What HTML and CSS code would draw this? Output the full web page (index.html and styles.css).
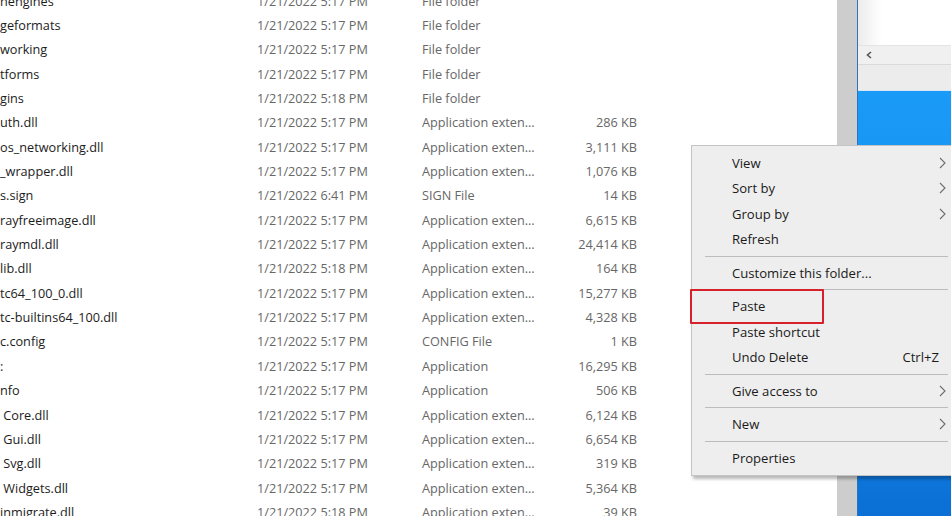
FILE: index.html
```html
<!DOCTYPE html>
<html lang="en">
<head>
    <meta charset="UTF-8">
    <meta name="viewport" content="width=device-width, initial-scale=1.0">
    <title>Explorer - context menu</title>
    <link rel="stylesheet" href="styles.css">
</head>
<body>
    <div class="files">
        <div class="file-list">
            <div class="row"><span class="name">hengines</span><span class="date">1/21/2022 5:17 PM</span><span class="type">File folder</span><span class="size"></span></div>
            <div class="row"><span class="name">geformats</span><span class="date">1/21/2022 5:17 PM</span><span class="type">File folder</span><span class="size"></span></div>
            <div class="row"><span class="name">working</span><span class="date">1/21/2022 5:17 PM</span><span class="type">File folder</span><span class="size"></span></div>
            <div class="row"><span class="name">tforms</span><span class="date">1/21/2022 5:17 PM</span><span class="type">File folder</span><span class="size"></span></div>
            <div class="row"><span class="name">gins</span><span class="date">1/21/2022 5:18 PM</span><span class="type">File folder</span><span class="size"></span></div>
            <div class="row"><span class="name">uth.dll</span><span class="date">1/21/2022 5:17 PM</span><span class="type">Application exten...</span><span class="size">286 KB</span></div>
            <div class="row"><span class="name">os_networking.dll</span><span class="date">1/21/2022 5:17 PM</span><span class="type">Application exten...</span><span class="size">3,111 KB</span></div>
            <div class="row"><span class="name">_wrapper.dll</span><span class="date">1/21/2022 5:17 PM</span><span class="type">Application exten...</span><span class="size">1,076 KB</span></div>
            <div class="row"><span class="name">s.sign</span><span class="date">1/21/2022 6:41 PM</span><span class="type">SIGN File</span><span class="size">14 KB</span></div>
            <div class="row"><span class="name">rayfreeimage.dll</span><span class="date">1/21/2022 5:17 PM</span><span class="type">Application exten...</span><span class="size">6,615 KB</span></div>
            <div class="row"><span class="name">raymdl.dll</span><span class="date">1/21/2022 5:17 PM</span><span class="type">Application exten...</span><span class="size">24,414 KB</span></div>
            <div class="row"><span class="name">lib.dll</span><span class="date">1/21/2022 5:18 PM</span><span class="type">Application exten...</span><span class="size">164 KB</span></div>
            <div class="row"><span class="name">tc64_100_0.dll</span><span class="date">1/21/2022 5:17 PM</span><span class="type">Application exten...</span><span class="size">15,277 KB</span></div>
            <div class="row"><span class="name">tc-builtins64_100.dll</span><span class="date">1/21/2022 5:17 PM</span><span class="type">Application exten...</span><span class="size">4,328 KB</span></div>
            <div class="row"><span class="name">c.config</span><span class="date">1/21/2022 5:17 PM</span><span class="type">CONFIG File</span><span class="size">1 KB</span></div>
            <div class="row"><span class="name">:</span><span class="date">1/21/2022 5:17 PM</span><span class="type">Application</span><span class="size">16,295 KB</span></div>
            <div class="row"><span class="name">nfo</span><span class="date">1/21/2022 5:17 PM</span><span class="type">Application</span><span class="size">506 KB</span></div>
            <div class="row"><span class="name">&nbsp;Core.dll</span><span class="date">1/21/2022 5:17 PM</span><span class="type">Application exten...</span><span class="size">6,124 KB</span></div>
            <div class="row"><span class="name">&nbsp;Gui.dll</span><span class="date">1/21/2022 5:17 PM</span><span class="type">Application exten...</span><span class="size">6,654 KB</span></div>
            <div class="row"><span class="name">&nbsp;Svg.dll</span><span class="date">1/21/2022 5:17 PM</span><span class="type">Application exten...</span><span class="size">319 KB</span></div>
            <div class="row"><span class="name">&nbsp;Widgets.dll</span><span class="date">1/21/2022 5:17 PM</span><span class="type">Application exten...</span><span class="size">5,364 KB</span></div>
            <div class="row"><span class="name">inmigrate.dll</span><span class="date">1/21/2022 5:18 PM</span><span class="type">Application exten...</span><span class="size">39 KB</span></div>
        </div>
    </div>

    <div class="track"></div>

    <div class="desktop">
        <div class="window">
            <div class="win-body"></div>
            <div class="hscroll">
                <svg class="scroll-arrow" width="6" height="8" viewBox="0 0 6 8"><polyline points="5,1 1.5,4 5,7" fill="none" stroke="#555" stroke-width="1.6"/></svg>
            </div>
            <div class="win-status"></div>
        </div>
        <div class="wallpaper"></div>
    </div>

    <div class="context-menu">
        <div class="item"><span>View</span><svg class="chev" width="7" height="12" viewBox="0 0 7 12"><polyline points="1,1 6,6 1,11" fill="none" stroke="#6e6e6e" stroke-width="1.1"/></svg></div>
        <div class="item"><span>Sort by</span><svg class="chev" width="7" height="12" viewBox="0 0 7 12"><polyline points="1,1 6,6 1,11" fill="none" stroke="#6e6e6e" stroke-width="1.1"/></svg></div>
        <div class="item"><span>Group by</span><svg class="chev" width="7" height="12" viewBox="0 0 7 12"><polyline points="1,1 6,6 1,11" fill="none" stroke="#6e6e6e" stroke-width="1.1"/></svg></div>
        <div class="item"><span>Refresh</span></div>
        <div class="sep"></div>
        <div class="item"><span>Customize this folder...</span></div>
        <div class="sep"></div>
        <div class="item marked"><span>Paste</span></div>
        <div class="item"><span>Paste shortcut</span></div>
        <div class="item"><span>Undo Delete</span><span class="shortcut">Ctrl+Z</span></div>
        <div class="sep"></div>
        <div class="item"><span>Give access to</span><svg class="chev" width="7" height="12" viewBox="0 0 7 12"><polyline points="1,1 6,6 1,11" fill="none" stroke="#6e6e6e" stroke-width="1.1"/></svg></div>
        <div class="sep"></div>
        <div class="item"><span>New</span><svg class="chev" width="7" height="12" viewBox="0 0 7 12"><polyline points="1,1 6,6 1,11" fill="none" stroke="#6e6e6e" stroke-width="1.1"/></svg></div>
        <div class="sep"></div>
        <div class="item"><span>Properties</span></div>
    </div>
</body>
</html>
```

FILE: styles.css
```css
* {
    margin: 0;
    padding: 0;
    box-sizing: border-box;
}

body {
    font-family: 'Open Sans', 'Noto Sans', 'Liberation Sans', sans-serif;
    font-size: 12.7px;
    background: #ffffff;
    width: 951px;
    height: 516px;
    overflow: hidden;
    display: flex;
    position: relative;
}

/* file list */
.files {
    width: 837px;
    flex-shrink: 0;
    background: #ffffff;
    overflow: hidden;
}

.file-list {
    margin-top: -11.5px;
}

.row {
    display: grid;
    grid-template-columns: 257px 165px 130px 85px;
    height: 24.35px;
    align-items: center;
    white-space: nowrap;
}

.name {
    color: #1c1c1c;
    overflow: hidden;
}

.date,
.type,
.size {
    color: #676767;
}

.size {
    text-align: right;
}

/* gray strip between explorer and desktop */
.track {
    width: 20px;
    flex-shrink: 0;
    background: #cdcdcd;
}

.desktop {
    flex: 1;
    display: flex;
    flex-direction: column;
    border-left: 1px solid #2d73c0;
}

.window {
    height: 91px;
    display: flex;
    flex-direction: column;
    background: #ececec;
}

.win-body {
    height: 45px;
    background: linear-gradient(90deg, #ececec 0, #ffffff 24px);
}

.hscroll {
    height: 20px;
    background: #f0f0f0;
    border-top: 1px solid #e4e4e4;
    border-bottom: 1px solid #dadada;
    display: flex;
    align-items: center;
    padding-left: 8px;
}

.win-status {
    flex: 1;
    background: #ececec;
    border-bottom: 1px solid #d8e6f3;
}

.wallpaper {
    flex: 1;
    background: linear-gradient(180deg, #1a9bf7 0, #1589ea 60%, #0b6fd5 100%);
}

/* context menu */
.context-menu {
    position: absolute;
    left: 691px;
    top: 145px;
    width: 272px;
    background: #eeeeee;
    border: 1px solid #c4c4c4;
    box-shadow: 2px 3px 3px rgba(0, 0, 0, 0.28);
    padding: 4px 0 4px 0;
    color: #1a1a1a;
    font-size: 13.1px;
}

.item {
    position: relative;
    height: 25.5px;
    display: flex;
    align-items: center;
    justify-content: space-between;
    padding: 0 16px 0 40px;
    white-space: nowrap;
}

.shortcut {
    margin-right: 7px;
}

.chev {
    display: block;
}

.sep {
    height: 8px;
    display: flex;
    align-items: center;
    padding: 0 14px 0 13px;
}

.sep::before {
    content: "";
    flex: 1;
    height: 1px;
    background: #bcbcbc;
}

.item.marked::after {
    content: "";
    box-sizing: border-box;
    position: absolute;
    left: -2px;
    top: -4.5px;
    width: 134px;
    height: 35px;
    border: 2px solid #d6202a;
    border-radius: 1px;
}
```
